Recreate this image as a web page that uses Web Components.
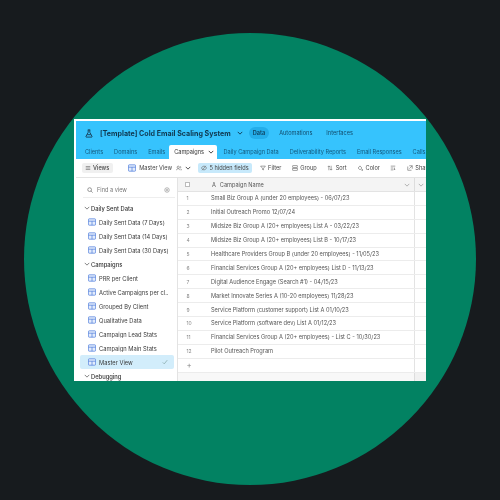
<!DOCTYPE html>
<html>
<head>
<meta charset="utf-8">
<title>Cold Email Scaling System</title>
<style>
  html, body { margin: 0; height: 100%; background: #171b1e; }
  body { font-family: 'Inter', 'Liberation Sans', sans-serif; overflow: hidden; }
</style>
</head>
<body>
<promo-circle>
  <base-window>
    <base-header slot="header"></base-header>
    <table-tabs slot="tabs"></table-tabs>
    <view-toolbar slot="toolbar"></view-toolbar>
    <view-sidebar slot="sidebar">
      <view-group>Daily Sent Data</view-group>
      <view-item>Daily Sent Data (7 Days)</view-item>
      <view-item>Daily Sent Data (14 Days)</view-item>
      <view-item>Daily Sent Data (30 Days)</view-item>
      <view-group>Campaigns</view-group>
      <view-item>PRR per Client</view-item>
      <view-item>Active Campaigns per cl...</view-item>
      <view-item>Grouped By Client</view-item>
      <view-item>Qualitative Data</view-item>
      <view-item>Campaign Lead Stats</view-item>
      <view-item>Campaign Main Stats</view-item>
      <view-item active>Master View</view-item>
      <view-group>Debugging</view-group>
    </view-sidebar>
    <data-grid slot="grid">
      <grid-row num="1">Small Biz Group A (under 20 employees) - 06/07/23</grid-row>
      <grid-row num="2">Initial Outreach Promo 12/07/24</grid-row>
      <grid-row num="3">Midsize Biz Group A (20+ employees) List A - 03/22/23</grid-row>
      <grid-row num="4">Midsize Biz Group A (20+ employees) List B - 10/17/23</grid-row>
      <grid-row num="5">Healthcare Providers Group B (under 20 employees) - 11/05/23</grid-row>
      <grid-row num="6">Financial Services Group A (20+ employees) List D - 11/13/23</grid-row>
      <grid-row num="7">Digital Audience Engage (Search #1) - 04/15/23</grid-row>
      <grid-row num="8">Market Innovate Series A (10-20 employees) 11/28/23</grid-row>
      <grid-row num="9">Service Platform (customer support) List A 01/10/23</grid-row>
      <grid-row num="10">Service Platform (software dev) List A 01/12/23</grid-row>
      <grid-row num="11">Financial Services Group A (20+ employees) - List C - 10/30/23</grid-row>
      <grid-row num="12">Pilot Outreach Program</grid-row>
      <grid-row num="+"></grid-row>
    </data-grid>
  </base-window>
</promo-circle>

<script>
const chevron = `<svg width="6" height="6" viewBox="0 0 8 8" fill="none" stroke="currentColor" stroke-width="1.2"><path d="M1 2.500l3 3 3-3"/></svg>`;
const gridIcon = `<svg width="8" height="8" viewBox="0 0 10 10" fill="#e3ecfc" stroke="#4f7ddc" stroke-width=".9"><rect x=".5" y="1" width="9" height="8" rx="1"/><path d="M.5 4h9M5 4v5"/></svg>`;
const icon = d => `<svg width="6" height="6" viewBox="0 0 8 8" fill="none" stroke="#666" stroke-width=".8">${d}</svg>`;
const icons = {
  views: icon('<path d="M1 2h6M1 4h6M1 6h6"/>'),
  people: icon('<circle cx="3" cy="3" r="1.500"/><path d="M.5 7c.3-1.500 1.200-2 2.500-2s2.200.5 2.500 2M5.500 1.700a1.400 1.400 0 010 2.600M6.500 5.200c.5.400.8 1 1 1.800"/>'),
  hidden: icon('<path d="M.5 4s1.300-2.500 3.500-2.500S7.500 4 7.500 4 6.200 6.500 4 6.500.5 4 .5 4z"/><path d="M1.500 7L6.500 1"/>'),
  filter: icon('<path d="M.8 1.500h6.400L4.700 4.300v2.200L3.300 6V4.300z"/>'),
  group: icon('<rect x="1" y="1" width="6" height="2.500"/><rect x="1" y="4.500" width="6" height="2.500"/>'),
  sort: icon('<path d="M2.500 7V1.200M1 2.700l1.500-1.500L4 2.700M5.500 1v5.800M4 5.300l1.500 1.500L7 5.300"/>'),
  color: icon('<path d="M1.500 4L4 1.200 6.500 4 4 6.500zM7 5.500c-.5.700-.7 1-.7 1.300a.7.7 0 001.400 0c0-.3-.2-.6-.7-1.300z"/>'),
  height: icon('<path d="M1 1.500h6M1 4h3.500M1 6.500h3.500M6 3.500v3M5.200 5.700l.8.8.8-.8"/>'),
  share: icon('<path d="M1 2v5h5M3 1h4v4M7 1L3.200 4.800"/>')
};

class PromoCircle extends HTMLElement {
  constructor() {
    super();
    this.attachShadow({ mode: 'open' });
    this.shadowRoot.innerHTML = `
      <style>
        :host { display: block; width: 500px; height: 500px; padding: 33px 0 0 24px; box-sizing: border-box; }
        .circle { width: 452px; height: 452px; border-radius: 50%; background: #028262; padding: 86px 0 0 50px; box-sizing: border-box; }
      </style>
      <div class="circle"><slot></slot></div>`;
  }
}

class BaseWindow extends HTMLElement {
  constructor() {
    super();
    this.attachShadow({ mode: 'open' });
    this.shadowRoot.innerHTML = `
      <style>
        :host { display: flex; flex-direction: column; width: 352px; height: 262px; padding: 2px 0 0 2px; box-sizing: border-box; background: #fff; overflow: hidden; color: #333; filter: blur(.3px); }
        .body { flex: 1; display: flex; min-height: 0; }
      </style>
      <slot name="header"></slot>
      <slot name="tabs"></slot>
      <slot name="toolbar"></slot>
      <div class="body"><slot name="sidebar"></slot><slot name="grid"></slot></div>`;
  }
}

class BaseHeader extends HTMLElement {
  constructor() {
    super();
    this.attachShadow({ mode: 'open' });
    this.shadowRoot.innerHTML = `
      <style>
        :host { display: flex; align-items: center; height: 24px; background: #36c3fd; padding-left: 9px; color: #10384f; flex: none; }
        svg.logo { margin-right: 7px; }
        .title { font-size: 7.1px; font-weight: 700; white-space: nowrap; }
        .chev { margin: 0 6px 0 6px; display: flex; }
        .tab { font-size: 5.600px; padding: 3px 4px; border-radius: 6px; margin-right: 6px; color: #124a6a; }
        .tab.on { background: #24aeea; font-weight: 600; color: #0e3c58; }
      </style>
      <svg class="logo" width="8" height="9" viewBox="0 0 10 11" fill="none" stroke="#16384f" stroke-width="1.100"><path d="M3.500 1h3M4 1v3L1.200 9.200c-.2.400 0 .8.500.8h6.600c.5 0 .7-.4.500-.8L6 4V1M2.800 7h4.400"/></svg>
      <span class="title">[Template] Cold Email Scaling System</span>
      <span class="chev">${chevron}</span>
      <span class="tab on">Data</span><span class="tab">Automations</span><span class="tab">Interfaces</span>`;
  }
}

class TableTabs extends HTMLElement {
  constructor() {
    super();
    this.attachShadow({ mode: 'open' });
    const names = ['Clients', 'Domains', 'Emails', 'Campaigns', 'Daily Campaign Data', 'Deliverability Reports', 'Email Responses', 'Calls'];
    this.shadowRoot.innerHTML = `
      <style>
        :host { display: flex; height: 14px; background: #36c3fd; padding-left: 3.500px; flex: none; overflow: hidden; }
        span { font-size: 5.600px; color: #14587c; padding: 0 5.500px; line-height: 14px; white-space: nowrap; display: flex; align-items: center; gap: 4px; }
        span.on { background: #fff; color: #333; border-radius: 2px 2px 0 0; padding: 0 3px 0 5px; margin-left: -1.500px; margin-right: 1px; }
      </style>
      ${names.map(n => n === 'Campaigns' ? `<span class="on">${n} ${chevron}</span>` : `<span>${n}</span>`).join('')}`;
  }
}

class ViewToolbar extends HTMLElement {
  constructor() {
    super();
    this.attachShadow({ mode: 'open' });
    this.shadowRoot.innerHTML = `
      <style>
        :host { display: flex; align-items: center; height: 19px; box-sizing: border-box; border-bottom: 1px solid #e3e3e3; padding-left: 6px; font-size: 5.600px; color: #444; flex: none; white-space: nowrap; overflow: hidden; }
        span { display: flex; align-items: center; }
        .views { background: #f0f0f0; padding: 2px 4px 2px 3px; border-radius: 2px; margin-right: 15px; gap: 2px; font-weight: 500; }
        .master { gap: 3px; margin-right: 7px; }
        .master em { font-style: normal; margin-right: 1px; }
        .hidden { background: #c7e9fb; padding: 2px 3px; border-radius: 2px; gap: 2.500px; margin-right: 8px; }
        .tool { gap: 2.500px; margin-right: 10.500px; }
      </style>
      <span class="views">${icons.views}Views</span>
      <span class="master">${gridIcon}<em>Master View</em>${icons.people}${chevron}</span>
      <span class="hidden">${icons.hidden}5 hidden fields</span>
      <span class="tool">${icons.filter}Filter</span>
      <span class="tool">${icons.group}Group</span>
      <span class="tool">${icons.sort}Sort</span>
      <span class="tool">${icons.color}Color</span>
      <span class="tool">${icons.height}</span>
      <span class="tool">${icons.share}Share and sync</span>`;
  }
}

class ViewSidebar extends HTMLElement {
  constructor() {
    super();
    this.attachShadow({ mode: 'open' });
    this.shadowRoot.innerHTML = `
      <style>
        :host { display: block; width: 102px; flex: none; box-sizing: border-box; padding: 0 3px 0 4px; border-right: 1px solid #e3e3e3; overflow: hidden; }
        .find { display: flex; align-items: center; gap: 4px; height: 20px; box-sizing: border-box; padding: 4px 5px 0 4px; margin: 0 -1px 3px 3px; border-bottom: 1px solid #eee; font-size: 5.600px; color: #777; }
        .find span { flex: 1; }
        svg { display: block; }
      </style>
      <div class="find">
        <svg width="6" height="6" viewBox="0 0 8 8" fill="none" stroke="#777" stroke-width="1"><circle cx="3.500" cy="3.500" r="2.500"/><path d="M5.500 5.500L7.500 7.500"/></svg>
        <span>Find a view</span>
        <svg width="6" height="6" viewBox="0 0 8 8" fill="none" stroke="#888" stroke-width=".8"><circle cx="4" cy="4" r="3"/><circle cx="4" cy="4" r="1"/></svg>
      </div>
      <slot></slot>`;
  }
}

class ViewGroup extends HTMLElement {
  constructor() {
    super();
    this.attachShadow({ mode: 'open' });
    this.shadowRoot.innerHTML = `
      <style>
        :host { display: flex; align-items: center; gap: 1px; height: 14px; padding-left: 4px; font-size: 5.800px; font-weight: 500; color: #333; }
        span { display: flex; color: #777; }
      </style>
      <span>${chevron}</span><slot></slot>`;
  }
}

class ViewItem extends HTMLElement {
  constructor() {
    super();
    this.attachShadow({ mode: 'open' });
    this.shadowRoot.innerHTML = `
      <style>
        :host { display: flex; align-items: center; gap: 3px; height: 14px; padding: 0 6px 0 8px; font-size: 5.750px; color: #3a3a3a; white-space: nowrap; border-radius: 2px; }
        :host([active]) { background: #d2edfb; }
        .slot { flex: 1; overflow: hidden; }
        .check { display: none; }
        :host([active]) .check { display: block; }
      </style>
      ${gridIcon}<span class="slot"><slot></slot></span>
      <svg class="check" width="6" height="6" viewBox="0 0 8 8" fill="none" stroke="#8aa" stroke-width="1"><path d="M1 4.500l2 2 4-5"/></svg>`;
  }
}

class DataGrid extends HTMLElement {
  constructor() {
    super();
    this.attachShadow({ mode: 'open' });
    this.shadowRoot.innerHTML = `
      <style>
        :host { display: flex; flex-direction: column; flex: 1; min-width: 0; overflow: hidden; font-size: 5.650px; color: #555; }
        .head { display: flex; align-items: center; height: 14px; box-sizing: border-box; background: #f4f4f4; border-bottom: 1px solid #e3e3e3; color: #555; flex: none; font-size: 5.600px; }
        .box { width: 34px; flex: none; padding-left: 7px; box-sizing: border-box; }
        .box i { display: block; width: 5px; height: 5px; border: 1px solid #bbb; background: #fff; box-sizing: border-box; }
        .name { flex: 1; display: flex; gap: 4px; align-items: center; padding-right: 4px; }
        .name b { font-weight: 400; flex: 1; }
        .extra { width: 12px; flex: none; height: 100%; box-sizing: border-box; border-left: 1px solid #ddd; display: flex; align-items: center; justify-content: center; color: #aaa; }
        .foot { flex: 1; display: flex; justify-content: flex-end; background: #f8f8f8; }
        .foot .extra { background: #f1f1f1; }
      </style>
      <div class="head">
        <span class="box"><i></i></span>
        <span class="name"><span>A</span><b>Campaign Name</b><span style="display:flex;color:#aaa">${chevron}</span></span>
        <span class="extra">${chevron}</span>
      </div>
      <slot></slot>
      <div class="foot"><span class="extra"></span></div>`;
  }
}

class GridRow extends HTMLElement {
  constructor() {
    super();
    this.attachShadow({ mode: 'open' });
    const num = this.getAttribute('num');
    this.shadowRoot.innerHTML = `
      <style>
        :host { display: flex; align-items: center; height: 13.900px; box-sizing: border-box; border-bottom: 1px solid #ececec; white-space: nowrap; flex: none; }
        .num { width: 33px; flex: none; padding-left: 8.500px; box-sizing: border-box; color: #888; font-size: ${num === '+' ? 8 : 5}px; }
        .txt { flex: 1; height: 100%; display: flex; align-items: center; overflow: hidden; }
        .extra { width: 12px; flex: none; height: 100%; border-left: 1px solid #e3e3e3; box-sizing: border-box; }
      </style>
      <span class="num">${num}</span>
      <span class="txt"><slot></slot></span>
      <span class="extra"></span>`;
  }
}

customElements.define('promo-circle', PromoCircle);
customElements.define('base-window', BaseWindow);
customElements.define('base-header', BaseHeader);
customElements.define('table-tabs', TableTabs);
customElements.define('view-toolbar', ViewToolbar);
customElements.define('view-sidebar', ViewSidebar);
customElements.define('view-group', ViewGroup);
customElements.define('view-item', ViewItem);
customElements.define('data-grid', DataGrid);
customElements.define('grid-row', GridRow);
</script>
</body>
</html>
